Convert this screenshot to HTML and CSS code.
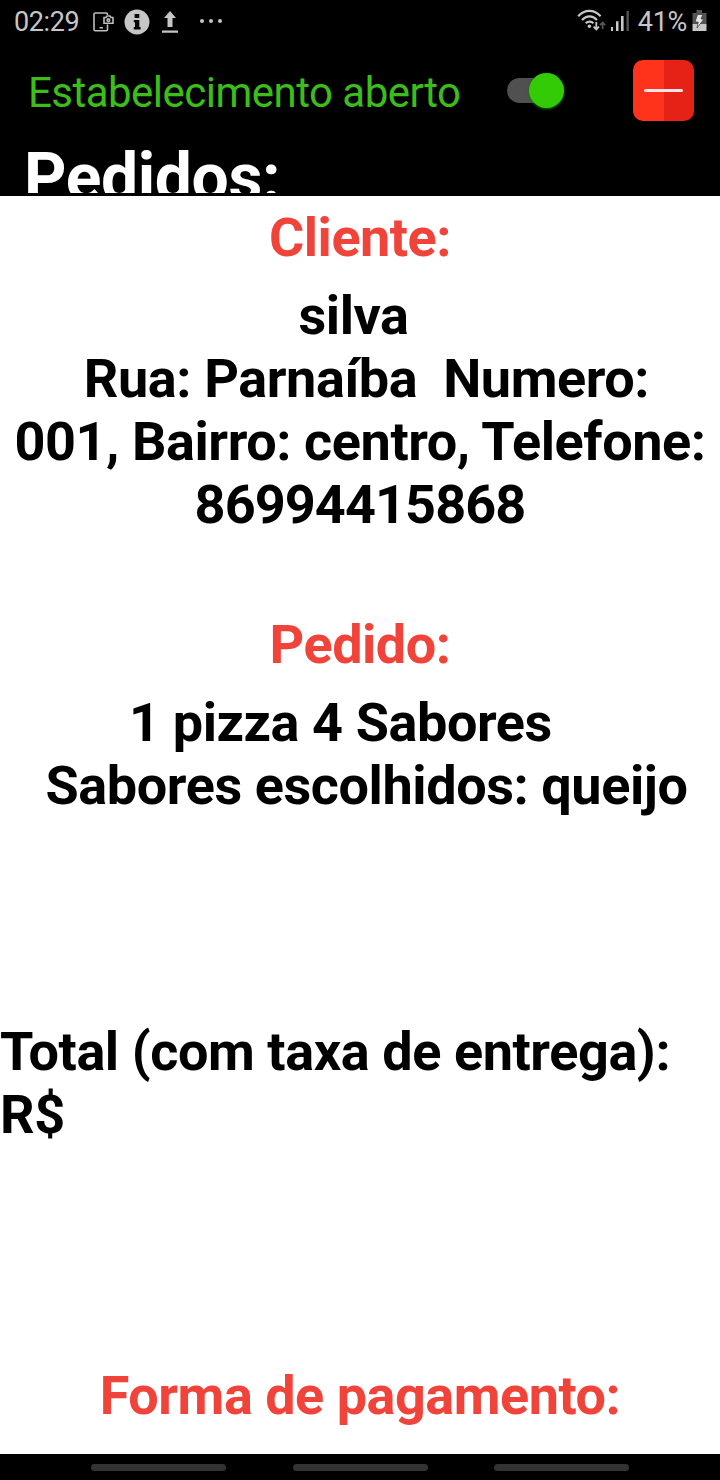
FILE: index.html
```html
<!DOCTYPE html>
<html lang="pt-BR">
<head>
<meta charset="utf-8">
<title>Pedidos</title>
<link rel="stylesheet" href="styles.css">
</head>
<body>
<header class="status">
  <div class="status-left">
    <span class="clock">02:29</span>
    <svg class="capture" width="21" height="21" viewBox="0 0 21 21" fill="none" stroke="#bdbdbd" stroke-width="1.6"><path d="M14.5 3V2.3Q14.5 1 13.2 1H2.3Q1 1 1 2.3V17.5Q1 18.8 2.3 18.8H13.2Q14.5 18.8 14.5 17.5V12.5M6.5 15.8H10"/><path d="M11 5.5H13L14 4H17L18 5.5H20V11.2H11Z"/><circle cx="15.4" cy="8.2" r="1.3"/></svg>
    <svg class="info" width="26" height="26" viewBox="0 0 26 26"><circle cx="13" cy="13" r="12.5" fill="#c6c6c6"/><path d="M10.6 5H15.3V9H10.6ZM9.8 11H15.3V18H16.6V20.4H9.8V18H11V13.3H9.8Z" fill="#050505"/></svg>
    <svg class="upload" width="18" height="24" viewBox="0 0 18 24" fill="#c6c6c6"><path d="M9 1L15 8H11.5V17H6.5V8H3ZM1 20.5H17V22.7H1Z"/></svg>
    <svg class="more" width="24" height="6" viewBox="0 0 24 6" fill="#c6c6c6"><circle cx="3" cy="3" r="2"/><circle cx="12" cy="3" r="2"/><circle cx="21" cy="3" r="2"/></svg>
  </div>
  <div class="status-right">
    <svg width="30" height="24" viewBox="0 0 30 24" fill="none" stroke="#c8c8c8" stroke-width="2.2"><path d="M1.2 7.2C7.7.2 17.1.2 23.6 7.2M5 11C9.7 6.2 15.4 6.2 20 11M8.7 14.3C11.1 12 14.2 12 16.4 14.3"/><circle cx="12.4" cy="17.3" r="1.7" fill="#c8c8c8" stroke="none"/><path d="M19.3 13V20.3M16.6 17.7L19.3 20.5L22 17.7" stroke-width="1.8"/><path d="M25.6 20V14M23 16.2L25.6 13.5L28.2 16.2" stroke="#555" stroke-width="1.8"/></svg>
    <svg class="signal" width="20" height="22" viewBox="0 0 20 22"><path d="M1 17H3V21H1ZM6 11.3H8.5V21H6ZM11 6H13.6V21H11Z" fill="#c8c8c8"/><path d="M16.5 1H18.8V21H16.5Z" fill="#555"/></svg>
    <span class="percent">41%</span>
    <svg class="battery" width="15" height="23" viewBox="0 0 15 23"><path d="M4.5 1H10V4H14.5V15H.5V4H4.5Z" fill="#555"/><path d="M.5 15H14.5V22H.5Z" fill="#c8c8c8"/><path d="M5.5 5.5H10.8L9 10H12L5 19L6.2 13H3Z" fill="#e6e6e6" stroke="#333" stroke-width=".7"/></svg>
  </div>
</header>
<section class="toolbar">
  <span class="open-label">Estabelecimento aberto</span>
  <span class="switch"><span class="thumb"></span></span>
  <span class="minus"><span class="minus-line"></span></span>
</section>
<h1 class="orders">Pedidos:</h1>
<main class="receipt">
  <h2 class="heading">Cliente:</h2>
  <div class="text client">silva 
 Rua: Parnaíba  Numero:
001, Bairro: centro, Telefone:
<span class="phone">86994415868</span></div>
  <h2 class="heading">Pedido:</h2>
  <div class="text items">1 pizza 4 Sabores   
 Sabores escolhidos: queijo</div>
  <div class="text total">Total (com taxa de entrega):
R$</div>
  <h2 class="heading">Forma de pagamento:</h2>
</main>
<footer class="nav"><span class="nav-key"></span><span class="nav-key"></span><span class="nav-key"></span></footer>
</body>
</html>
```

FILE: styles.css
```css
* { box-sizing: border-box; }
body { margin: 0; width: 720px; height: 1480px; background: #000; font-family: Roboto, sans-serif; display: flex; flex-direction: column; overflow: hidden; }
svg { display: block; flex: none; }
.status { height: 44px; flex: none; display: flex; justify-content: space-between; padding: 0 13px 0 14px; color: #c6c6c6; font-size: 27px; line-height: 44px; }
.status-left, .status-right { display: flex; align-items: center; }
.clock { width: 79px; letter-spacing: -0.4px; }
.info { margin-left: 9.5px; }
.upload { margin-left: 11px; }
.more { margin-left: 20px; margin-top: -2px; }
.status-right svg { margin-top: -3px; }
.signal { margin-left: 3px; }
.percent { margin: 0 5px 0 8px; letter-spacing: -0.3px; }
.toolbar { height: 96px; flex: none; display: flex; align-items: center; padding: 0 26px 4px 28px; }
.open-label { width: 479px; font-size: 42px; line-height: 49px; letter-spacing: -0.52px; color: #3cbd19; white-space: nowrap; padding-top: 5px; }
.switch { width: 57px; height: 25px; border-radius: 13px; background: #505050; display: flex; align-items: center; justify-content: flex-end; }
.thumb { width: 35px; height: 35px; flex: none; border-radius: 50%; background: #33cb05; box-shadow: 0 1px 3px #1c7402; }
.minus { margin-left: auto; width: 61px; height: 61px; border-radius: 10px; background: linear-gradient(90deg, #ff321b 50%, #e62115 50%); display: flex; align-items: center; justify-content: center; }
.minus-line { width: 39px; height: 3px; border-radius: 2px; background: #ffe2e4; }
.orders { margin: 0; padding: 3px 0 0 24px; height: 53px; flex: none; overflow: hidden; font-size: 66px; line-height: 70px; letter-spacing: -0.4px; color: #fff; }
.receipt { margin-top: 3px; height: 1258px; flex: none; padding-top: 10px; background: #fff; overflow: hidden; }
.heading { margin: 0; font-size: 54px; line-height: 63px; letter-spacing: -0.5px; text-align: center; color: #f0443a; }
.text { font-size: 54px; font-weight: 700; line-height: 63px; letter-spacing: -0.42px; white-space: pre; color: #000; }
.phone { letter-spacing: -0.9px; }
.client { height: 329px; padding-top: 15px; text-align: center; margin-bottom: 15px; }
.items { height: 344px; padding-top: 15px; text-align: center; }
.total { height: 344px; }
.nav { height: 26px; flex: none; display: flex; justify-content: center; align-items: center; gap: 66.5px; }
.nav-key { width: 135px; height: 7px; border-radius: 4px; background: #333; }
```
